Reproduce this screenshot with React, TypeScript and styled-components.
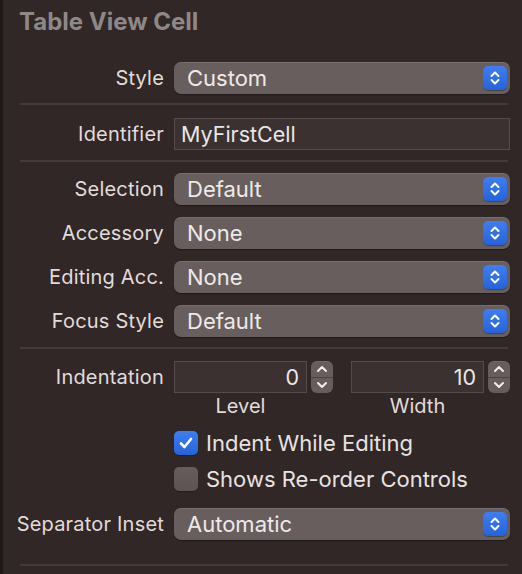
import styled, { createGlobalStyle } from 'styled-components';

const GlobalStyle = createGlobalStyle`
  html, body {
    margin: 0;
    padding: 0;
    background: #302726;
  }
  body {
    font-family: Inter, "Noto Sans", sans-serif;
    -webkit-font-smoothing: antialiased;
  }
`;

// Inspector panel
const Panel = styled.div`
  width: 522px;
  height: 574px;
  box-sizing: border-box;
  border-left: 3px solid #1d1918;
  background: #302726;
  overflow: hidden;
  display: flex;
  flex-direction: column;
`;

const Title = styled.h2`
  margin: 0;
  padding: 8px 0 0 16px;
  font-size: 24px;
  line-height: 28px;
  font-weight: 700;
  color: #8e8886;
`;

// Label column + control column
const Row = styled.div<{ $mt?: number }>`
  display: grid;
  grid-template-columns: 161px 336px;
  column-gap: 10px;
  align-items: center;
  margin-top: ${({ $mt }) => $mt ?? 0}px;
`;

const Label = styled.span`
  text-align: right;
  font-size: 20px;
  line-height: 24px;
  letter-spacing: 0.2px;
  color: #e2dcdb;
  white-space: nowrap;
`;

const Divider = styled.div<{ $mt: number; $mb?: number }>`
  height: 2px;
  width: 488px;
  background: #433a39;
  margin: ${({ $mt, $mb }) => `${$mt}px 0 ${$mb ?? 0}px 17px`};
`;

// Pop-up button
const Popup = styled.div`
  height: 32px;
  box-sizing: border-box;
  border-radius: 7px;
  background: #685e5d;
  box-shadow: inset 0 1px 0 rgba(255, 255, 255, 0.1), 0 1px 1px rgba(0, 0, 0, 0.35);
  display: flex;
  align-items: center;
  justify-content: space-between;
  padding: 0 3px 0 13px;
  font-size: 22px;
  color: #eeeae9;
`;

const PopupArrows = styled.div`
  width: 24px;
  height: 24px;
  border-radius: 5px;
  background: linear-gradient(#3f7ef0, #2563db);
  box-shadow: 0 1px 1px rgba(0, 0, 0, 0.3);
  display: flex;
  align-items: center;
  justify-content: center;
`;

const TextField = styled.div<{ $align?: 'left' | 'right' }>`
  height: 32px;
  box-sizing: border-box;
  border: 1px solid #554b4a;
  background: #3a3130;
  display: flex;
  align-items: center;
  justify-content: ${({ $align }) => ($align === 'right' ? 'flex-end' : 'flex-start')};
  padding: 0 7px 0 6px;
  font-size: 21.5px;
  color: #ebe6e5;
`;

const StepperPair = styled.div`
  display: grid;
  grid-template-columns: 1fr 1fr;
  column-gap: 18px;
`;

const StepperGroup = styled.div`
  display: flex;
  gap: 4px;
  & > ${TextField} {
    flex: 1;
  }
`;

const Stepper = styled.div`
  width: 22px;
  height: 32px;
  border-radius: 6px;
  background: #675d5c;
  box-shadow: inset 0 1px 0 rgba(255, 255, 255, 0.08);
  display: flex;
  flex-direction: column;
  & > div {
    flex: 1;
    display: flex;
    align-items: center;
    justify-content: center;
  }
  & > div:first-child {
    border-bottom: 1px solid #4b4140;
  }
`;

const SubLabel = styled.span`
  padding-right: 26px;
  text-align: center;
  font-size: 20px;
  line-height: 26px;
  color: #e2dcdb;
`;

const CheckRow = styled.label`
  grid-column: 2;
  display: flex;
  align-items: center;
  gap: 8px;
  font-size: 22px;
  line-height: 24px;
  color: #e8e3e2;
  white-space: nowrap;
`;

const Box = styled.span<{ $checked: boolean }>`
  flex: none;
  width: 24px;
  height: 24px;
  border-radius: 5px;
  display: flex;
  align-items: center;
  justify-content: center;
  background: ${({ $checked }) =>
    $checked ? 'linear-gradient(#3f7ef0, #2563db)' : 'linear-gradient(#675d5c, #5d5352)'};
  box-shadow: 0 1px 1px rgba(0, 0, 0, 0.3);
`;

const Arrows = () => (
  <svg width="12" height="16" viewBox="0 0 12 16" fill="none" stroke="#fff" strokeWidth="2" strokeLinecap="round" strokeLinejoin="round">
    <path d="M2.5 6 L6 2.5 L9.5 6" />
    <path d="M2.5 10 L6 13.5 L9.5 10" />
  </svg>
);

const Chevron = ({ up }: { up?: boolean }) => (
  <svg width="12" height="8" viewBox="0 0 12 8" fill="none" stroke="#f2eeed" strokeWidth="2" strokeLinecap="round" strokeLinejoin="round">
    <path d={up ? 'M2 6 L6 2 L10 6' : 'M2 2 L6 6 L10 2'} />
  </svg>
);

const PopupRow = ({ label, value, mt }: { label: string; value: string; mt?: number }) => (
  <Row $mt={mt}>
    <Label>{label}</Label>
    <Popup>
      {value}
      <PopupArrows>
        <Arrows />
      </PopupArrows>
    </Popup>
  </Row>
);

const NumberStepper = ({ value }: { value: string }) => (
  <StepperGroup>
    <TextField $align="right">{value}</TextField>
    <Stepper>
      <div><Chevron up /></div>
      <div><Chevron /></div>
    </Stepper>
  </StepperGroup>
);

const Check = ({ checked, label, mt }: { checked: boolean; label: string; mt: number }) => (
  <Row $mt={mt}>
    <CheckRow>
      <Box $checked={checked}>
        {checked && (
          <svg width="16" height="16" viewBox="0 0 16 16" fill="none" stroke="#fff" strokeWidth="2.6" strokeLinecap="round" strokeLinejoin="round">
            <path d="M3 8.5 L6.5 12 L13 4" />
          </svg>
        )}
      </Box>
      {label}
    </CheckRow>
  </Row>
);

export default function App() {
  return (
    <>
      <GlobalStyle />
      <Panel>
        <Title>Table View Cell</Title>
        <PopupRow label="Style" value="Custom" mt={26} />
        <Divider $mt={9} $mb={13} />
        <Row>
          <Label>Identifier</Label>
          <TextField>MyFirstCell</TextField>
        </Row>
        <Divider $mt={10} $mb={11} />
        <PopupRow label="Selection" value="Default" />
        <PopupRow label="Accessory" value="None" mt={12} />
        <PopupRow label="Editing Acc." value="None" mt={12} />
        <PopupRow label="Focus Style" value="Default" mt={12} />
        <Divider $mt={10} $mb={12} />
        <Row>
          <Label>Indentation</Label>
          <StepperPair>
            <NumberStepper value="0" />
            <NumberStepper value="10" />
          </StepperPair>
        </Row>
        <Row>
          <span />
          <StepperPair>
            <SubLabel>Level</SubLabel>
            <SubLabel>Width</SubLabel>
          </StepperPair>
        </Row>
        <Check checked label="Indent While Editing" mt={12} />
        <Check checked={false} label="Shows Re-order Controls" mt={12} />
        <PopupRow label="Separator Inset" value="Automatic" mt={17} />
        <Divider $mt={24} />
      </Panel>
    </>
  );
}
